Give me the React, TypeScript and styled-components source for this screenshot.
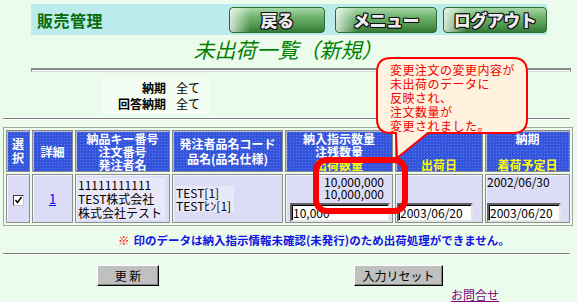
import React from 'react';
import styled, { createGlobalStyle } from 'styled-components';

const GlobalStyle = createGlobalStyle`
  html, body { margin: 0; padding: 0; }
  body {
    width: 577px;
    height: 302px;
    overflow: hidden;
    background: #ecfcec;
    font-family: "Noto Sans CJK JP", "Liberation Sans", sans-serif;
    font-size: 12px;
    color: #000;
  }
`;

const Page = styled.div`
  position: relative;
  padding: 4px 4px 0 3px;
`;

const HeaderBar = styled.div`
  box-sizing: border-box;
  width: 516px;
  height: 31px;
  margin-left: 28px;
  padding-left: 6px;
  display: flex;
  align-items: center;
  justify-content: space-between;
  background-color: #a6e2e2;
  background-image: radial-gradient(#c8f0f0 0.6px, transparent 0.9px);
  background-size: 2px 2px;
`;

const AppName = styled.div`
  font-size: 16px;
  font-weight: bold;
  color: #0a6a0a;
  letter-spacing: 0.5px;
`;

const NavGroup = styled.div`
  display: flex;
  align-items: center;
  height: 100%;
`;

const NavButton = styled.div<{ $w: number; $ml: number }>`
  box-sizing: border-box;
  width: ${(p) => p.$w}px;
  margin-left: ${(p) => p.$ml}px;
  height: 26px;
  display: flex;
  align-items: center;
  justify-content: center;
  border: 1px solid #2f6a2f;
  border-radius: 4px;
  background:
    linear-gradient(to right, rgba(255, 255, 255, 0.75) 0%, rgba(255, 255, 255, 0) 22%),
    linear-gradient(to bottom, #a8d8a8 0%, #6cb06c 40%, #4e964e 75%, #347834 100%);
  color: #ececec;
  font-size: 17px;
  font-weight: 900;
  letter-spacing: -0.5px;
  text-shadow:
    -1px -1px 0 #111, 1px -1px 0 #111, -1px 1px 0 #111, 1px 1px 0 #111,
    0 -1px 0 #111, 0 1px 0 #111, -1px 0 0 #111, 1px 0 0 #111;
`;

const Title = styled.h1`
  margin: 2px 0 0;
  font-size: 21px;
  line-height: 24px;
  font-weight: normal;
  font-style: italic;
  text-align: center;
  color: #008000;
`;

const FrameLine = styled.div`
  margin: 7px 0 0 28px;
  width: 540px;
  height: 4px;
  box-sizing: border-box;
  border: 1px solid #8a8a8a;
  border-top-width: 2px;
  border-bottom-color: #d8d8d8;
`;

const FilterBox = styled.div`
  margin: 6px 0 0 99px;
  width: 108px;
  padding: 1px 0 3px;
  display: grid;
  grid-template-columns: 64px 44px;
  column-gap: 10px;
  grid-auto-rows: 16px;
  align-items: center;
  background: rgba(255, 255, 255, 0.45);
`;

const FilterLabel = styled.div`
  font-weight: bold;
  text-align: right;
  white-space: nowrap;
`;

const FilterValue = styled.div`
  white-space: nowrap;
`;

const Divider = styled.div`
  margin-top: 4px;
  width: 567px;
  border-top: 1px solid #808080;
  border-bottom: 1px solid #ffffff;
`;

const Table = styled.table`
  margin-top: 7px;
  width: 570px;
  table-layout: fixed;
  border-collapse: separate;
  border-spacing: 2px;
  border: 1px solid #a4a4a4;
`;

const HeadCell = styled.th<{ $w: number }>`
  width: ${(p) => p.$w}px;
  height: 42px;
  box-sizing: border-box;
  padding: 0;
  background-color: #3454dc;
  background-image: radial-gradient(rgba(130, 160, 255, 0.55) 0.6px, transparent 0.9px);
  background-size: 3px 3px;
  border: 1px solid #8a8a8a;
  box-shadow: inset 1px 1px 0 #b8b8c8;
  color: #ffffff;
  font-size: 12px;
  font-weight: bold;
  line-height: 13px;
  text-align: center;
  vertical-align: middle;
  white-space: nowrap;
`;

const HeadLine = styled.div<{ $yellow?: boolean; $lh?: number }>`
  color: ${(p) => (p.$yellow ? '#ffff00' : '#ffffff')};
  height: ${(p) => p.$lh ?? 13}px;
  line-height: ${(p) => p.$lh ?? 13}px;
`;

const BodyCell = styled.td<{ $align?: string; $valign?: string; $pad?: string }>`
  height: 49px;
  box-sizing: border-box;
  padding: ${(p) => p.$pad ?? '0'};
  background: #dcdcf6;
  border: 1px solid #8c8c8c;
  box-shadow: inset 1px 1px 0 #f4f4ff;
  text-align: ${(p) => p.$align ?? 'left'};
  vertical-align: ${(p) => p.$valign ?? 'middle'};
  font-size: 12px;
  line-height: 12px;
  white-space: nowrap;
`;

const TextBlock = styled.div<{ $lh: number }>`
  display: inline-block;
  background: #e8e8f8;
  line-height: ${(p) => p.$lh}px;
  padding-right: 3px;
`;

const Check = styled.span`
  display: inline-block;
  width: 11px;
  height: 11px;
  box-sizing: border-box;
  background: #ffffff;
  border: 1px solid;
  border-color: #404040 #c8c8c8 #c8c8c8 #404040;
  vertical-align: middle;
  position: relative;
  top: 1px;
`;

const DetailLink = styled.a`
  color: #0000ee;
  text-decoration: underline;
  font-size: 13px;
`;

const NumLine = styled.div`
  text-align: right;
  padding-right: 8px;
  height: 12px;
`;

const DateLine = styled.div`
  padding-left: 0;
  height: 12px;
`;

const Blank = styled.div`
  height: 24px;
`;

const Field = styled.input<{ $w: number }>`
  box-sizing: border-box;
  display: block;
  width: ${(p) => p.$w}px;
  height: 19px;
  margin-top: 3px;
  padding: 0 1px;
  font-family: "Noto Sans CJK JP", sans-serif;
  font-size: 12px;
  color: #000;
  background: #fff;
  border: 2px solid;
  border-color: #606060 #e4e4e4 #e4e4e4 #606060;
  box-shadow: inset 1px 1px 0 #000;
  outline: none;
`;

const Notice = styled.div`
  margin-top: 7px;
  padding-left: 115px;
  height: 14px;
  line-height: 14px;
  font-size: 11.5px;
  font-weight: bold;
  color: #1414e0;
  white-space: nowrap;
`;

const Mark = styled.span`
  color: #ff0000;
  margin-right: 4px;
`;

const BottomDivider = styled(Divider)`
  margin-top: 6px;
`;

const ButtonRow = styled.div`
  margin-top: 10px;
  padding-left: 94px;
  display: flex;
  gap: 195px;
`;

const FormButton = styled.button<{ $w: number }>`
  box-sizing: border-box;
  width: ${(p) => p.$w}px;
  height: 21px;
  padding: 0;
  font-family: "Noto Sans CJK JP", sans-serif;
  font-size: 12px;
  line-height: 17px;
  color: #000;
  background: #c0c0c0;
  border: 1px solid;
  border-color: #ffffff #000000 #000000 #ffffff;
  box-shadow: inset -1px -1px 0 #808080;
`;

const FooterRow = styled.div`
  display: flex;
  justify-content: flex-end;
  padding-right: 74px;
  margin-top: 1px;
`;

const ContactLink = styled.a`
  color: #800080;
  text-decoration: underline;
  font-size: 12px;
  line-height: 16px;
`;

const Highlight = styled.div`
  position: absolute;
  left: 313px;
  top: 157px;
  width: 95px;
  height: 57px;
  box-sizing: border-box;
  border: 6px solid #ff0000;
  border-radius: 14px;
  pointer-events: none;
`;

const Callout = styled.div`
  position: absolute;
  left: 376px;
  top: 57px;
  width: 153px;
  height: 103px;
  pointer-events: none;
`;

const CalloutShape = styled.svg`
  position: absolute;
  left: 0;
  top: 0;
  overflow: visible;
`;

const CalloutText = styled.div`
  position: relative;
  padding: 6px 0 0 14px;
  color: #f00000;
  font-size: 12px;
  line-height: 14px;
  letter-spacing: 0.5px;
  white-space: nowrap;
`;

export default function App() {
  return (
    <>
      <GlobalStyle />
      <Page>
        <HeaderBar>
          <AppName>販売管理</AppName>
          <NavGroup>
            <NavButton $w={96} $ml={0}>戻る</NavButton>
            <NavButton $w={102} $ml={10}>メニュー</NavButton>
            <NavButton $w={104} $ml={6}>ログアウト</NavButton>
          </NavGroup>
        </HeaderBar>
        <Title>未出荷一覧（新規）</Title>
        <FrameLine />
        <FilterBox>
          <FilterLabel>納期</FilterLabel>
          <FilterValue>全て</FilterValue>
          <FilterLabel>回答納期</FilterLabel>
          <FilterValue>全て</FilterValue>
        </FilterBox>
        <Divider />
        <Table>
          <thead>
            <tr>
              <HeadCell $w={24}>
                <HeadLine $lh={14}>選</HeadLine>
                <HeadLine $lh={14}>択</HeadLine>
              </HeadCell>
              <HeadCell $w={41}>詳細</HeadCell>
              <HeadCell $w={95}>
                <HeadLine>納品キー番号</HeadLine>
                <HeadLine>注文番号</HeadLine>
                <HeadLine>発注者名</HeadLine>
              </HeadCell>
              <HeadCell $w={111}>
                <HeadLine $lh={15}>発注者品名コード</HeadLine>
                <HeadLine $lh={15}>品名(品名仕様)</HeadLine>
              </HeadCell>
              <HeadCell $w={108}>
                <HeadLine>納入指示数量</HeadLine>
                <HeadLine>注残数量</HeadLine>
                <HeadLine $yellow>出荷数量</HeadLine>
              </HeadCell>
              <HeadCell $w={88}>
                <HeadLine />
                <HeadLine />
                <HeadLine $yellow>出荷日</HeadLine>
              </HeadCell>
              <HeadCell $w={85}>
                <HeadLine>納期</HeadLine>
                <HeadLine />
                <HeadLine $yellow>着荷予定日</HeadLine>
              </HeadCell>
            </tr>
          </thead>
          <tbody>
            <tr>
              <BodyCell $align="center">
                <Check>
                  <svg width="9" height="9" viewBox="0 0 9 9" style={{ display: 'block' }}>
                    <path d="M1.5 4 L3.5 6.5 L7.5 1" fill="none" stroke="#000" strokeWidth="1.4" />
                  </svg>
                </Check>
              </BodyCell>
              <BodyCell $align="center">
                <DetailLink href="#">1</DetailLink>
              </BodyCell>
              <BodyCell $pad="0 0 0 2px">
                <TextBlock $lh={14}>
                  11111111111
                  <br />
                  TEST株式会社
                  <br />
                  株式会社テスト
                </TextBlock>
              </BodyCell>
              <BodyCell $pad="0 0 0 3px">
                <TextBlock $lh={13}>
                  TEST[1]
                  <br />
                  TESTﾋﾝ[1]
                </TextBlock>
              </BodyCell>
              <BodyCell $valign="top" $pad="1px 0 0 4px">
                <NumLine>10,000,000</NumLine>
                <NumLine>10,000,000</NumLine>
                <Field $w={100} defaultValue="10,000" readOnly />
              </BodyCell>
              <BodyCell $valign="top" $pad="1px 0 0 1px">
                <Blank />
                <Field $w={76} defaultValue="2003/06/20" readOnly />
              </BodyCell>
              <BodyCell $valign="top" $pad="1px 0 0 1px">
                <DateLine>2002/06/30</DateLine>
                <DateLine />
                <Field $w={74} defaultValue="2003/06/20" readOnly />
              </BodyCell>
            </tr>
          </tbody>
        </Table>
        <Notice>
          <Mark>※</Mark>印のデータは納入指示情報未確認(未発行)のため出荷処理ができません。
        </Notice>
        <BottomDivider />
        <ButtonRow>
          <FormButton $w={62}>更 新</FormButton>
          <FormButton $w={89}>入力リセット</FormButton>
        </ButtonRow>
        <FooterRow>
          <ContactLink href="#">お問合せ</ContactLink>
        </FooterRow>
        <Highlight />
        <Callout>
          <CalloutShape width="153" height="103" viewBox="0 0 153 103">
            <path
              d="M15 1 H137 Q151 1 151 15 V62 Q151 76 137 76 H52 L21 101 L20 76 H15 Q1 76 1 62 V15 Q1 1 15 1 Z"
              fill="#fff2de"
              stroke="#ff0000"
              strokeWidth="2"
            />
          </CalloutShape>
          <CalloutText>
            変更注文の変更内容が
            <br />
            未出荷のデータに
            <br />
            反映され、
            <br />
            注文数量が
            <br />
            変更されました。
          </CalloutText>
        </Callout>
      </Page>
    </>
  );
}
